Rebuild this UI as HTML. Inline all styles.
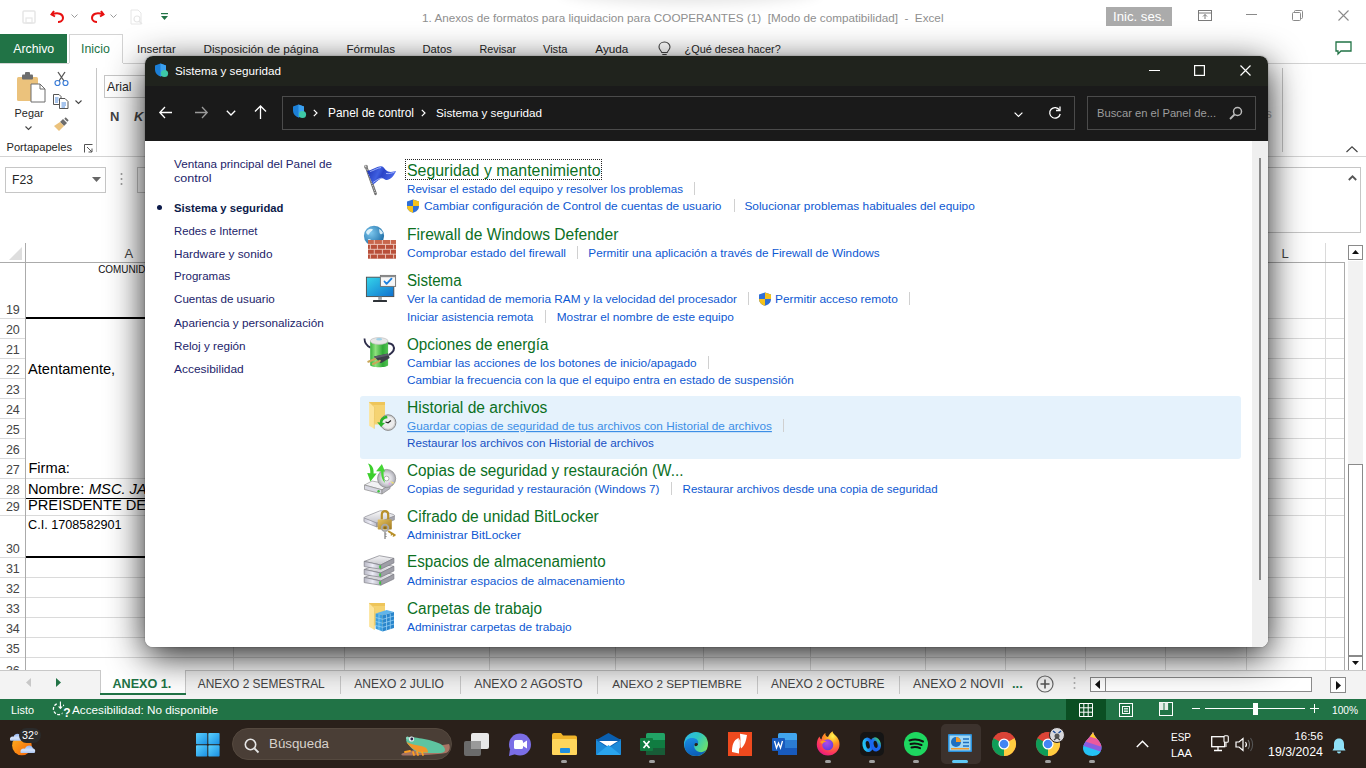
<!DOCTYPE html>
<html><head><meta charset="utf-8">
<style>
*{margin:0;padding:0;box-sizing:border-box}
html,body{width:1366px;height:768px;overflow:hidden;background:#fff;font-family:"Liberation Sans",sans-serif}
.a{position:absolute;white-space:nowrap}
svg.a{overflow:visible}
</style></head><body>

<div class="a" style="left:560px;top:-30px;width:260px;height:30px;border-radius:50%;box-shadow:0 4px 14px rgba(0,0,0,.10)"></div>
<div class="a" style="left:1106px;top:7px;width:66px;height:19px;background:#ababab;"></div>
<svg class="a" style="left:22px;top:10px;" width="14" height="14" viewBox="0 0 14 14"><rect x="1" y="1" width="12" height="12" rx="1" fill="none" stroke="#e6e6e6" stroke-width="1.5"/><rect x="4" y="8" width="6" height="5" fill="none" stroke="#e6e6e6" stroke-width="1.2"/></svg>
<svg class="a" style="left:50px;top:9px;" width="16" height="14" viewBox="0 0 16 14"><path d="M4 2 L1.5 5.5 L5 7.5" fill="none" stroke="#e81010" stroke-width="2"/><path d="M2 5.5 C8 3 13 5 13 9 C13 12 10 13 8 13" fill="none" stroke="#e81010" stroke-width="2"/></svg>
<svg class="a" style="left:71px;top:14px;" width="7" height="4" viewBox="0 0 7 4"><path d="M0.5 0.5 L3.5 3.5 L6.5 0.5" fill="none" stroke="#9a9a9a" stroke-width="1"/></svg>
<svg class="a" style="left:89px;top:9px;" width="16" height="14" viewBox="0 0 16 14"><path d="M12 2 L14.5 5.5 L11 7.5" fill="none" stroke="#e81010" stroke-width="2"/><path d="M14 5.5 C8 3 3 5 3 9 C3 12 6 13 8 13" fill="none" stroke="#e81010" stroke-width="2"/></svg>
<svg class="a" style="left:110px;top:14px;" width="7" height="4" viewBox="0 0 7 4"><path d="M0.5 0.5 L3.5 3.5 L6.5 0.5" fill="none" stroke="#9a9a9a" stroke-width="1"/></svg>
<svg class="a" style="left:130px;top:9px;" width="14" height="16" viewBox="0 0 14 16"><path d="M1 1 H8 L11 4 V15 H1 Z" fill="none" stroke="#e6e6e6" stroke-width="1"/><circle cx="7" cy="10" r="3" fill="none" stroke="#e6e6e6" stroke-width="1.2"/><path d="M9 12 L12 15" stroke="#e6e6e6" stroke-width="1.5"/></svg>
<svg class="a" style="left:161px;top:13px;" width="7" height="8" viewBox="0 0 7 8"><rect x="0" y="0" width="7" height="1.2" fill="#217346"/><path d="M0 3 H7 L3.5 7 Z" fill="#217346"/></svg>
<svg class="a" style="left:1198px;top:10px;" width="14" height="11" viewBox="0 0 14 11"><rect x="0.5" y="0.5" width="13" height="10" fill="none" stroke="#7a7a7a"/><path d="M0.5 3 H13.5" stroke="#7a7a7a"/><path d="M7 9 V4.5 M5 6.5 L7 4.5 L9 6.5" fill="none" stroke="#7a7a7a"/></svg>
<div class="a" style="left:1246px;top:14px;width:11px;height:1px;background:#8a8a8a;"></div>
<svg class="a" style="left:1292px;top:10px;" width="11" height="11" viewBox="0 0 11 11"><rect x="0.5" y="2.5" width="8" height="8" rx="1" fill="none" stroke="#8a8a8a"/><path d="M2.5 2.5 V1.5 Q2.5 0.5 3.5 0.5 H9.5 Q10.5 0.5 10.5 1.5 V7.5 Q10.5 8.5 9.5 8.5 H8.5" fill="none" stroke="#8a8a8a"/></svg>
<svg class="a" style="left:1338px;top:10px;" width="11" height="11" viewBox="0 0 11 11"><path d="M0.5 0.5 L10.5 10.5 M10.5 0.5 L0.5 10.5" stroke="#8a8a8a" stroke-width="1.1"/></svg>
<div class="a" style="left:0px;top:34px;width:67px;height:29px;background:#217346;"></div>
<div class="a" style="left:69px;top:34px;width:54px;height:30px;border:1px solid #d4d4d4;border-bottom:none;background:#fff"></div>
<svg class="a" style="left:658px;top:41px;" width="13" height="15" viewBox="0 0 13 15"><path d="M6.5 1 C3 1 1 3.5 1 6 C1 8.5 3 9.5 3.8 11.5 H9.2 C10 9.5 12 8.5 12 6 C12 3.5 10 1 6.5 1 Z" fill="none" stroke="#444" stroke-width="1.1"/><path d="M4.3 13.5 H8.7" stroke="#444" stroke-width="1.1"/></svg>
<div class="a" style="left:0px;top:63px;width:1366px;height:1px;background:#d4d4d4;"></div>
<div class="a" style="left:69px;top:63px;width:54px;height:1px;background:#fff;"></div>
<svg class="a" style="left:1335px;top:41px;" width="17" height="14" viewBox="0 0 17 14"><path d="M1 1 H16 V10 H6 L3 13 V10 H1 Z" fill="none" stroke="#217346" stroke-width="1.3"/></svg>
<svg class="a" style="left:17px;top:72px;" width="29" height="31" viewBox="0 0 29 31"><rect x="0" y="5" width="21" height="24" rx="1.5" fill="#ebc27c"/><rect x="5" y="2.5" width="11" height="5" rx="1" fill="#6d6d6d"/><rect x="8" y="0" width="5" height="4" rx="1" fill="#6d6d6d"/><path d="M14 12 H23 L28 17 V30 H14 Z" fill="#fff" stroke="#6d6d6d" stroke-width="1"/><path d="M23 12 V17 H28" fill="none" stroke="#6d6d6d" stroke-width="1"/></svg>
<svg class="a" style="left:25px;top:126px;" width="7" height="4" viewBox="0 0 7 4"><path d="M0.5 0.5 L3.5 3.5 L6.5 0.5" fill="none" stroke="#444" stroke-width="1.1"/></svg>
<svg class="a" style="left:54px;top:71px;" width="15" height="15" viewBox="0 0 15 15"><path d="M4 1 L10 10 M11 1 L5 10" stroke="#555" stroke-width="1.3"/><circle cx="3.5" cy="12" r="2.5" fill="none" stroke="#3b7dd8" stroke-width="1.2"/><circle cx="11.5" cy="12" r="2.5" fill="none" stroke="#3b7dd8" stroke-width="1.2"/></svg>
<svg class="a" style="left:53px;top:94px;" width="16" height="15" viewBox="0 0 16 15"><path d="M0.5 0.5 H6 L8 2.5 V10.5 H0.5 Z" fill="#fff" stroke="#555"/><path d="M6.5 4.5 H12 L15 7.5 V14.5 H6.5 Z" fill="#fff" stroke="#555"/><path d="M2 4 H5.5 M2 6 H5.5 M2 8 H5 M8.5 9 H13 M8.5 11 H13 M8.5 13 H12" stroke="#3b7dd8" stroke-width=".9"/></svg>
<svg class="a" style="left:75px;top:100px;" width="7" height="4" viewBox="0 0 7 4"><path d="M0.5 0.5 L3.5 3.5 L6.5 0.5" fill="none" stroke="#444" stroke-width="1.1"/></svg>
<svg class="a" style="left:53px;top:117px;" width="16" height="14" viewBox="0 0 16 14"><path d="M10 2 L14 6 L11 9 L7 5 Z" fill="#6d6d6d"/><path d="M7 5 L11 9 L6 14 L1 9 Z" fill="#ebc27c"/><path d="M12 1 L15 4" stroke="#6d6d6d" stroke-width="2"/></svg>
<svg class="a" style="left:84px;top:144px;" width="9" height="9" viewBox="0 0 9 9"><path d="M0.5 8.5 V0.5 H8.5" fill="none" stroke="#555"/><path d="M3 3 L8 8 M8 4.5 V8 H4.5" fill="none" stroke="#555"/></svg>
<div class="a" style="left:96px;top:68px;width:1px;height:84px;background:#c6c6c6;"></div>
<div class="a" style="left:104px;top:75px;width:60px;height:23px;border:1px solid #c6c6c6;background:#fff"></div>
<div class="a" style="left:1282px;top:68px;width:1px;height:84px;background:#c6c6c6;"></div>
<svg class="a" style="left:1346px;top:146px;" width="12" height="7" viewBox="0 0 12 7"><path d="M0.5 6 L6 0.8 L11.5 6" fill="none" stroke="#444" stroke-width="1.2"/></svg>
<div class="a" style="left:0px;top:156px;width:1366px;height:1px;background:#d4d4d4;"></div>
<div class="a" style="left:5px;top:167px;width:101px;height:26px;border:1px solid #c6c6c6;background:#fff"></div>
<svg class="a" style="left:92px;top:177px;" width="9" height="5" viewBox="0 0 9 5"><path d="M0 0 H9 L4.5 5 Z" fill="#666"/></svg>
<svg class="a" style="left:120px;top:172px;" width="3" height="14" viewBox="0 0 3 14"><circle cx="1.5" cy="2" r="1" fill="#999"/><circle cx="1.5" cy="7" r="1" fill="#999"/><circle cx="1.5" cy="12" r="1" fill="#999"/></svg>
<div class="a" style="left:137px;top:167px;width:30px;height:26px;border:1px solid #c6c6c6;background:#fff"></div>
<div class="a" style="left:1200px;top:167px;width:161px;height:66px;border:1px solid #c6c6c6;background:#fff"></div>
<svg class="a" style="left:1348px;top:175px;" width="9" height="6" viewBox="0 0 9 6"><path d="M0.8 5 L4.5 1.3 L8.2 5" fill="none" stroke="#555" stroke-width="1.8"/></svg>
<div class="a" style="left:233px;top:262px;width:1px;height:408px;background:#dadada;"></div>
<div class="a" style="left:344px;top:262px;width:1px;height:408px;background:#dadada;"></div>
<div class="a" style="left:489px;top:262px;width:1px;height:408px;background:#dadada;"></div>
<div class="a" style="left:615px;top:262px;width:1px;height:408px;background:#dadada;"></div>
<div class="a" style="left:703px;top:262px;width:1px;height:408px;background:#dadada;"></div>
<div class="a" style="left:810px;top:262px;width:1px;height:408px;background:#dadada;"></div>
<div class="a" style="left:925px;top:262px;width:1px;height:408px;background:#dadada;"></div>
<div class="a" style="left:1005px;top:262px;width:1px;height:408px;background:#dadada;"></div>
<div class="a" style="left:1085px;top:262px;width:1px;height:408px;background:#dadada;"></div>
<div class="a" style="left:1165px;top:262px;width:1px;height:408px;background:#dadada;"></div>
<div class="a" style="left:1246px;top:262px;width:1px;height:408px;background:#dadada;"></div>
<div class="a" style="left:1325px;top:243px;width:1px;height:427px;background:#dadada;"></div>
<div class="a" style="left:0px;top:318px;width:25px;height:1px;background:#dadada;"></div>
<div class="a" style="left:234px;top:318px;width:1110px;height:1px;background:#dadada;"></div>
<div class="a" style="left:0px;top:338px;width:25px;height:1px;background:#dadada;"></div>
<div class="a" style="left:234px;top:338px;width:1110px;height:1px;background:#dadada;"></div>
<div class="a" style="left:0px;top:358px;width:25px;height:1px;background:#dadada;"></div>
<div class="a" style="left:234px;top:358px;width:1110px;height:1px;background:#dadada;"></div>
<div class="a" style="left:0px;top:378px;width:25px;height:1px;background:#dadada;"></div>
<div class="a" style="left:234px;top:378px;width:1110px;height:1px;background:#dadada;"></div>
<div class="a" style="left:0px;top:398px;width:25px;height:1px;background:#dadada;"></div>
<div class="a" style="left:234px;top:398px;width:1110px;height:1px;background:#dadada;"></div>
<div class="a" style="left:0px;top:418px;width:25px;height:1px;background:#dadada;"></div>
<div class="a" style="left:234px;top:418px;width:1110px;height:1px;background:#dadada;"></div>
<div class="a" style="left:0px;top:438px;width:25px;height:1px;background:#dadada;"></div>
<div class="a" style="left:234px;top:438px;width:1110px;height:1px;background:#dadada;"></div>
<div class="a" style="left:0px;top:458px;width:25px;height:1px;background:#dadada;"></div>
<div class="a" style="left:234px;top:458px;width:1110px;height:1px;background:#dadada;"></div>
<div class="a" style="left:0px;top:478px;width:1344px;height:1px;background:#dadada;"></div>
<div class="a" style="left:0px;top:498px;width:1344px;height:1px;background:#dadada;"></div>
<div class="a" style="left:0px;top:515px;width:1344px;height:1px;background:#dadada;"></div>
<div class="a" style="left:0px;top:557px;width:1344px;height:1px;background:#dadada;"></div>
<div class="a" style="left:0px;top:577px;width:1344px;height:1px;background:#dadada;"></div>
<div class="a" style="left:0px;top:597px;width:1344px;height:1px;background:#dadada;"></div>
<div class="a" style="left:0px;top:617px;width:1344px;height:1px;background:#dadada;"></div>
<div class="a" style="left:0px;top:637px;width:1344px;height:1px;background:#dadada;"></div>
<div class="a" style="left:0px;top:657px;width:1344px;height:1px;background:#dadada;"></div>
<div class="a" style="left:0;top:657px;width:25px;height:13px;overflow:hidden"><div class="a" style="left:5.90px;top:7.69px;font-size:12.5px;line-height:12.5px;color:#444">36</div></div>
<div class="a" style="left:0px;top:243px;width:1344px;height:19px;background:#fff;opacity:0"></div>
<div class="a" style="left:0px;top:262px;width:1344px;height:1px;background:#ababab;"></div>
<div class="a" style="left:25px;top:243px;width:1px;height:427px;background:#ababab;"></div>
<div class="a" style="left:1344px;top:262px;width:1px;height:408px;background:#ababab;"></div>
<svg class="a" style="left:9px;top:247px;" width="13" height="13" viewBox="0 0 13 13"><path d="M13 0 V13 H0 Z" fill="#dedede"/></svg>
<div class="a" style="left:26px;top:317px;width:1150px;height:2px;background:#000;"></div>
<div class="a" style="left:26px;top:498px;width:1150px;height:1px;background:#000;"></div>
<div class="a" style="left:26px;top:556px;width:1150px;height:2px;background:#000;"></div>
<div class="a" style="left:1348px;top:261px;width:15px;height:409px;background:#f2f2f2;"></div>
<div class="a" style="left:1348px;top:245px;width:15px;height:15px;border:1px solid #8a8a8a;background:#fff"></div>
<svg class="a" style="left:1352px;top:250px;" width="7" height="4" viewBox="0 0 7 4"><path d="M0 4 L3.5 0 L7 4 Z" fill="#111"/></svg>
<div class="a" style="left:1348px;top:464px;width:15px;height:192px;border:1px solid #8a8a8a;background:#fff"></div>
<div class="a" style="left:1348px;top:656px;width:15px;height:15px;border:1px solid #8a8a8a;background:#fff"></div>
<svg class="a" style="left:1352px;top:661px;" width="7" height="4" viewBox="0 0 7 4"><path d="M0 0 L3.5 4 L7 0 Z" fill="#111"/></svg>
<div class="a" style="left:0px;top:670px;width:1366px;height:29px;background:#f3f3f3;"></div>
<div class="a" style="left:0px;top:670px;width:1366px;height:1px;background:#c8c8c8;"></div>
<div class="a" style="left:100px;top:670px;width:86px;height:25px;background:#fff;border-left:1px solid #c8c8c8;border-right:1px solid #c8c8c8"></div>
<div class="a" style="left:100px;top:693px;width:86px;height:2px;background:#217346;"></div>
<svg class="a" style="left:26px;top:678px;" width="5" height="9" viewBox="0 0 5 9"><path d="M5 0 V9 L0 4.5 Z" fill="#c8c8c8"/></svg>
<svg class="a" style="left:56px;top:678px;" width="5" height="9" viewBox="0 0 5 9"><path d="M0 0 V9 L5 4.5 Z" fill="#217346"/></svg>
<div class="a" style="left:340px;top:676px;width:1px;height:18px;background:#c8c8c8;"></div>
<div class="a" style="left:460px;top:676px;width:1px;height:18px;background:#c8c8c8;"></div>
<div class="a" style="left:597px;top:676px;width:1px;height:18px;background:#c8c8c8;"></div>
<div class="a" style="left:757px;top:676px;width:1px;height:18px;background:#c8c8c8;"></div>
<div class="a" style="left:899px;top:676px;width:1px;height:18px;background:#c8c8c8;"></div>
<svg class="a" style="left:1036px;top:675px;" width="18" height="18" viewBox="0 0 18 18"><circle cx="9" cy="9" r="8" fill="none" stroke="#666" stroke-width="1.2"/><path d="M9 4.5 V13.5 M4.5 9 H13.5" stroke="#555" stroke-width="1.6"/></svg>
<svg class="a" style="left:1073px;top:676px;" width="3" height="14" viewBox="0 0 3 14"><circle cx="1.5" cy="2" r="1" fill="#aaa"/><circle cx="1.5" cy="7" r="1" fill="#aaa"/><circle cx="1.5" cy="12" r="1" fill="#aaa"/></svg>
<div class="a" style="left:1090px;top:677px;width:222px;height:15px;border:1px solid #8a8a8a;background:#fff"></div>
<div class="a" style="left:1105px;top:678px;width:1px;height:13px;background:#8a8a8a;"></div>
<svg class="a" style="left:1095px;top:680px;" width="5" height="9" viewBox="0 0 5 9"><path d="M5 0 V9 L0 4.5 Z" fill="#111"/></svg>
<div class="a" style="left:1330px;top:677px;width:16px;height:16px;border:1px solid #8a8a8a;background:#fff"></div>
<svg class="a" style="left:1336px;top:681px;" width="5" height="9" viewBox="0 0 5 9"><path d="M0 0 V9 L5 4.5 Z" fill="#111"/></svg>
<div class="a" style="left:0px;top:699px;width:1366px;height:21px;background:#217346;"></div>
<svg class="a" style="left:50px;top:699px;" width="24" height="21" viewBox="0 0 24 21"><circle cx="9" cy="10" r="5.6" fill="none" stroke="#fff" stroke-width="1.3" stroke-dasharray="2.8 1.6" transform="rotate(-60 9 10)"/><rect x="8" y="2" width="5" height="6" fill="#217346"/><path d="M10.4 2.5 V8.5" stroke="#fff" stroke-width="1.1"/><path d="M8 7.6 H12.8 L10.4 10.2 Z" fill="#fff"/><rect x="12.5" y="7.5" width="8" height="11" fill="#217346"/><text x="13.2" y="17.6" font-size="12" font-weight="bold" fill="#fff" font-family="Liberation Sans">?</text></svg>
<div class="a" style="left:1066px;top:699px;width:40px;height:21px;background:#0b4f23;"></div>
<svg class="a" style="left:1079px;top:703px;" width="14" height="14" viewBox="0 0 14 14"><path d="M0.5 0.5 H13.5 V13.5 H0.5 Z M4.8 0.5 V13.5 M9.2 0.5 V13.5 M0.5 4.8 H13.5 M0.5 9.2 H13.5" fill="none" stroke="#fff" stroke-width="1"/></svg>
<svg class="a" style="left:1119px;top:703px;" width="14" height="14" viewBox="0 0 14 14"><rect x="0.5" y="0.5" width="13" height="13" fill="none" stroke="#fff"/><rect x="3.5" y="3.5" width="7" height="7" fill="none" stroke="#fff"/><path d="M5 5.5 H9 M5 7 H9 M5 8.5 H9" stroke="#fff" stroke-width=".8"/></svg>
<svg class="a" style="left:1159px;top:702px;" width="14" height="14" viewBox="0 0 14 14"><rect x="0.5" y="0.5" width="13" height="13" fill="none" stroke="#fff"/><rect x="0.5" y="0.5" width="4" height="7.5" fill="#e6eee8"/><rect x="5.5" y="0.5" width="3.6" height="7.5" fill="#e6eee8"/></svg>
<div class="a" style="left:1192px;top:708px;width:8px;height:1px;background:#fff;"></div>
<div class="a" style="left:1205px;top:708px;width:100px;height:1px;background:#fff;"></div>
<div class="a" style="left:1253px;top:703px;width:5px;height:12px;background:#fff;"></div>
<div class="a" style="left:1310px;top:708px;width:9px;height:1px;background:#fff;"></div>
<div class="a" style="left:1314px;top:704px;width:1px;height:9px;background:#fff;"></div>
<svg class="a" style="left:0;top:0" width="1366" height="768" font-family="Liberation Sans" xml:space="preserve"><text x="422.00" y="22.00" font-size="11.71" fill="#8f8f8f" textLength="521.50" lengthAdjust="spacingAndGlyphs">1. Anexos de formatos para liquidacion para COOPERANTES (1)  [Modo de compatibilidad]  -  Excel</text><text x="1113.00" y="21.00" font-size="13.18" fill="#fff" textLength="52.00" lengthAdjust="spacingAndGlyphs">Inic. ses.</text><text x="13.20" y="52.70" font-size="12.30" fill="#fff" textLength="41.00" lengthAdjust="spacingAndGlyphs">Archivo</text><text x="81.00" y="52.70" font-size="12.34" fill="#217346" textLength="28.80" lengthAdjust="spacingAndGlyphs">Inicio</text><text x="137.00" y="52.70" font-size="11.42" fill="#262626" textLength="38.70" lengthAdjust="spacingAndGlyphs">Insertar</text><text x="203.50" y="52.70" font-size="11.76" fill="#262626" textLength="115.10" lengthAdjust="spacingAndGlyphs">Disposición de página</text><text x="346.40" y="52.70" font-size="11.66" fill="#262626" textLength="48.60" lengthAdjust="spacingAndGlyphs">Fórmulas</text><text x="422.50" y="52.70" font-size="11.22" fill="#262626" textLength="29.30" lengthAdjust="spacingAndGlyphs">Datos</text><text x="479.60" y="52.70" font-size="10.74" fill="#262626" textLength="36.40" lengthAdjust="spacingAndGlyphs">Revisar</text><text x="542.90" y="52.70" font-size="11.16" fill="#262626" textLength="24.60" lengthAdjust="spacingAndGlyphs">Vista</text><text x="595.30" y="52.70" font-size="11.75" fill="#262626" textLength="33.10" lengthAdjust="spacingAndGlyphs">Ayuda</text><text x="684.60" y="52.70" font-size="10.87" fill="#262626" textLength="96.10" lengthAdjust="spacingAndGlyphs">¿Qué desea hacer?</text><text x="14.60" y="116.60" font-size="10.87" fill="#262626" textLength="29.00" lengthAdjust="spacingAndGlyphs">Pegar</text><text x="6.50" y="151.00" font-size="11.12" fill="#262626" textLength="65.50" lengthAdjust="spacingAndGlyphs">Portapapeles</text><text x="107.00" y="90.60" font-size="12.25" fill="#262626" textLength="24.50" lengthAdjust="spacingAndGlyphs">Arial</text><text x="110.00" y="120.50" font-size="13.00" fill="#444" font-weight="bold">N</text><text x="134.00" y="120.50" font-size="13.00" fill="#444" font-weight="bold" font-style="italic">K</text><text x="1265.50" y="118.00" font-size="12.50" fill="#a8a8a8">s</text><text x="12.00" y="184.00" font-size="12.19" fill="#262626" textLength="21.00" lengthAdjust="spacingAndGlyphs">F23</text><text x="5.90" y="313.50" font-size="12.50" fill="#444">19</text><text x="5.90" y="333.50" font-size="12.50" fill="#444">20</text><text x="5.90" y="353.50" font-size="12.50" fill="#444">21</text><text x="5.90" y="373.50" font-size="12.50" fill="#444">22</text><text x="5.90" y="393.50" font-size="12.50" fill="#444">23</text><text x="5.90" y="413.50" font-size="12.50" fill="#444">24</text><text x="5.90" y="433.50" font-size="12.50" fill="#444">25</text><text x="5.90" y="453.50" font-size="12.50" fill="#444">26</text><text x="5.90" y="473.50" font-size="12.50" fill="#444">27</text><text x="5.90" y="493.50" font-size="12.50" fill="#444">28</text><text x="5.90" y="510.50" font-size="12.50" fill="#444">29</text><text x="5.90" y="552.50" font-size="12.50" fill="#444">30</text><text x="5.90" y="572.50" font-size="12.50" fill="#444">31</text><text x="5.90" y="592.50" font-size="12.50" fill="#444">32</text><text x="5.90" y="612.50" font-size="12.50" fill="#444">33</text><text x="5.90" y="632.50" font-size="12.50" fill="#444">34</text><text x="5.90" y="652.50" font-size="12.50" fill="#444">35</text><text x="124.50" y="258.00" font-size="13.00" fill="#444">A</text><text x="1281.50" y="258.00" font-size="13.00" fill="#444">L</text><text x="98.20" y="273.00" font-size="11.50" fill="#111" textLength="61.00" lengthAdjust="spacingAndGlyphs">COMUNIDAD</text><text x="28.00" y="373.70" font-size="14.67" fill="#000">Atentamente,</text><text x="28.40" y="472.80" font-size="14.67" fill="#000">Firma:</text><text x="28.00" y="493.70" font-size="14.67" fill="#000">Nombre: </text><text x="88.90" y="493.70" font-size="14.67" fill="#000" font-style="italic">MSC. JAIME</text><text x="28.00" y="510.40" font-size="14.67" fill="#000">PREISDENTE DE LA</text><text x="28.00" y="528.80" font-size="12.67" fill="#000">C.I. 1708582901</text><text x="112.40" y="687.50" font-size="12.64" fill="#217346" font-weight="bold" textLength="59.00" lengthAdjust="spacingAndGlyphs">ANEXO 1.</text><text x="197.70" y="687.50" font-size="11.90" fill="#444" textLength="127.00" lengthAdjust="spacingAndGlyphs">ANEXO 2 SEMESTRAL</text><text x="354.30" y="687.50" font-size="12.05" fill="#444" textLength="89.70" lengthAdjust="spacingAndGlyphs">ANEXO 2 JULIO</text><text x="474.20" y="687.50" font-size="12.28" fill="#444" textLength="108.30" lengthAdjust="spacingAndGlyphs">ANEXO 2 AGOSTO</text><text x="612.20" y="687.50" font-size="11.71" fill="#444" textLength="129.50" lengthAdjust="spacingAndGlyphs">ANEXO 2 SEPTIEMBRE</text><text x="771.00" y="687.50" font-size="11.94" fill="#444" textLength="113.50" lengthAdjust="spacingAndGlyphs">ANEXO 2 OCTUBRE</text><text x="913.00" y="687.50" font-size="12.41" fill="#444" textLength="91.00" lengthAdjust="spacingAndGlyphs">ANEXO 2 NOVII</text><text x="1012.00" y="687.50" font-size="13.00" fill="#217346" font-weight="bold">...</text><text x="11.00" y="713.70" font-size="10.89" fill="#fff" textLength="23.00" lengthAdjust="spacingAndGlyphs">Listo</text><text x="72.00" y="713.70" font-size="11.73" fill="#fff" textLength="146.00" lengthAdjust="spacingAndGlyphs">Accesibilidad: No disponible</text><text x="1332.00" y="713.70" font-size="10.17" fill="#fff" textLength="26.00" lengthAdjust="spacingAndGlyphs">100%</text></svg>
<div class="a" style="left:0;top:720px;width:1366px;height:48px;background:#2a201a"></div>
<div class="a" style="left:145px;top:56px;width:1123px;height:591px;border-radius:8px;box-shadow:0 9px 36px rgba(0,0,0,.88),0 0 2px rgba(0,0,0,.35);"></div>
<div class="a" style="left:145px;top:56px;width:1123px;height:591px;border-radius:8px;overflow:hidden;background:#fff">
<div class="a" style="left:-145px;top:-56px;width:1366px;height:768px">
<div class="a" style="left:145px;top:56px;width:1123px;height:30px;background:#20231d;"></div>
<svg class="a" style="left:154px;top:63px;" width="15" height="15" viewBox="0 0 15 15"><path d="M6.5 0.5 L12 2.5 V6.5 C12 10 9.5 12.5 6.5 13.5 C3.5 12.5 1 10 1 6.5 V2.5 Z" fill="#1c7fd6"/><path d="M6.5 0.5 L12 2.5 V6.5 C12 10 9.5 12.5 6.5 13.5 Z" fill="#3aa0f0"/><circle cx="10.5" cy="10.5" r="3.6" fill="#3ec9a7"/></svg>
<div class="a" style="left:1149px;top:70px;width:11px;height:1px;background:#fff;"></div>
<svg class="a" style="left:1194px;top:65px;" width="11" height="11" viewBox="0 0 11 11"><rect x="0.6" y="0.6" width="9.8" height="9.8" fill="none" stroke="#fff" stroke-width="1.2"/></svg>
<svg class="a" style="left:1240px;top:65px;" width="11" height="11" viewBox="0 0 11 11"><path d="M0.5 0.5 L10.5 10.5 M10.5 0.5 L0.5 10.5" stroke="#fff" stroke-width="1.2"/></svg>
<div class="a" style="left:145px;top:86px;width:1123px;height:55px;background:#1a1a1a;"></div>
<svg class="a" style="left:159px;top:106px;" width="14" height="13" viewBox="0 0 14 13"><path d="M0.5 6.5 H13 M6 1 L0.8 6.5 L6 12" fill="none" stroke="#fff" stroke-width="1.3"/></svg>
<svg class="a" style="left:194px;top:106px;" width="14" height="13" viewBox="0 0 14 13"><path d="M1 6.5 H13.5 M8 1 L13.2 6.5 L8 12" fill="none" stroke="#9a9a9a" stroke-width="1.3"/></svg>
<svg class="a" style="left:226px;top:110px;" width="10" height="6" viewBox="0 0 10 6"><path d="M0.8 0.8 L5 5 L9.2 0.8" fill="none" stroke="#fff" stroke-width="1.3"/></svg>
<svg class="a" style="left:254px;top:105px;" width="13" height="14" viewBox="0 0 13 14"><path d="M6.5 14 V1 M1 6.5 L6.5 1 L12 6.5" fill="none" stroke="#fff" stroke-width="1.3"/></svg>
<div class="a" style="left:282px;top:96px;width:793px;height:34px;border:1px solid #4b4b4b"></div>
<svg class="a" style="left:292px;top:104px;" width="15" height="15" viewBox="0 0 15 15"><path d="M6.5 0.5 L12 2.5 V6.5 C12 10 9.5 12.5 6.5 13.5 C3.5 12.5 1 10 1 6.5 V2.5 Z" fill="#1c7fd6"/><path d="M6.5 0.5 L12 2.5 V6.5 C12 10 9.5 12.5 6.5 13.5 Z" fill="#3aa0f0"/><circle cx="10.5" cy="10.5" r="3.6" fill="#3ec9a7"/></svg>
<svg class="a" style="left:313px;top:109px;" width="5" height="8" viewBox="0 0 5 8"><path d="M0.8 0.8 L4 4 L0.8 7.2" fill="none" stroke="#fff" stroke-width="1.2"/></svg>
<svg class="a" style="left:421px;top:109px;" width="5" height="8" viewBox="0 0 5 8"><path d="M0.8 0.8 L4 4 L0.8 7.2" fill="none" stroke="#fff" stroke-width="1.2"/></svg>
<svg class="a" style="left:1014px;top:112px;" width="9" height="5" viewBox="0 0 9 5"><path d="M0.6 0.6 L4.5 4.4 L8.4 0.6" fill="none" stroke="#fff" stroke-width="1.2"/></svg>
<svg class="a" style="left:1048px;top:106px;" width="14" height="14" viewBox="0 0 14 14"><path d="M11.5 4 A5.3 5.3 0 1 0 12.2 8" fill="none" stroke="#fff" stroke-width="1.3"/><path d="M12 0.5 V4.5 H8" fill="none" stroke="#fff" stroke-width="1.3"/></svg>
<div class="a" style="left:1087px;top:96px;width:169px;height:34px;border:1px solid #4b4b4b"></div>
<svg class="a" style="left:1229px;top:106px;" width="14" height="14" viewBox="0 0 14 14"><circle cx="8.5" cy="5.5" r="4" fill="none" stroke="#bbb" stroke-width="1.5"/><path d="M5.5 8.5 L1 13" stroke="#bbb" stroke-width="1.8"/></svg>
<div class="a" style="left:1252px;top:141px;width:16px;height:506px;background:#efefef;"></div>
<div class="a" style="left:1259px;top:158px;width:2px;height:422px;background:#8a8a8a;"></div>
<div class="a" style="left:157px;top:205px;width:5px;height:5px;border-radius:50%;background:#0c1a4a"></div>
<div class="a" style="left:360px;top:396px;width:881px;height:63px;background:#e5f2fc;border-radius:3px;"></div>
<div class="a" style="left:405px;top:159px;width:197px;height:21px;border:1px dotted #222"></div>
<div class="a" style="left:694px;top:182px;width:1px;height:13px;background:#d0d0d0;"></div>
<svg class="a" style="left:406px;top:199px;" width="14" height="14" viewBox="0 0 14 14"><path d="M7 0.5 L13 2.5 V7 C13 10.5 10.5 12.8 7 13.8 C3.5 12.8 1 10.5 1 7 V2.5 Z" fill="#2f6fd6"/><path d="M7 0.5 L13 2.5 V7 H7 Z" fill="#f6c21a"/><path d="M7 7 H1 C1 10.5 3.5 12.8 7 13.8 Z" fill="#f6c21a"/></svg>
<div class="a" style="left:734px;top:199px;width:1px;height:13px;background:#d0d0d0;"></div>
<div class="a" style="left:577px;top:246px;width:1px;height:13px;background:#d0d0d0;"></div>
<div class="a" style="left:748px;top:292px;width:1px;height:13px;background:#d0d0d0;"></div>
<svg class="a" style="left:758px;top:292px;" width="14" height="14" viewBox="0 0 14 14"><path d="M7 0.5 L13 2.5 V7 C13 10.5 10.5 12.8 7 13.8 C3.5 12.8 1 10.5 1 7 V2.5 Z" fill="#2f6fd6"/><path d="M7 0.5 L13 2.5 V7 H7 Z" fill="#f6c21a"/><path d="M7 7 H1 C1 10.5 3.5 12.8 7 13.8 Z" fill="#f6c21a"/></svg>
<div class="a" style="left:909px;top:292px;width:1px;height:13px;background:#d0d0d0;"></div>
<div class="a" style="left:545px;top:310px;width:1px;height:13px;background:#d0d0d0;"></div>
<div class="a" style="left:708px;top:356px;width:1px;height:13px;background:#d0d0d0;"></div>
<div class="a" style="left:783px;top:419px;width:1px;height:13px;background:#d0d0d0;"></div>
<div class="a" style="left:671px;top:482px;width:1px;height:13px;background:#d0d0d0;"></div>
<svg class="a" style="left:360px;top:160px;" width="40" height="40" viewBox="0 0 40 40"><defs><linearGradient id="fg" x1="0" y1="0" x2="1" y2="0.3"><stop offset="0" stop-color="#1a2fb0"/><stop offset=".45" stop-color="#3f5fe0"/><stop offset=".6" stop-color="#2a44c8"/><stop offset="1" stop-color="#4a68e8"/></linearGradient></defs>
<path d="M6.2 7 L15.6 33.8" stroke="#6e6e6e" stroke-width="2.6" stroke-linecap="round"/><path d="M6.2 7 L15.6 33.8" stroke="#e8e8e8" stroke-width=".9" stroke-dasharray="1.2 1.2"/>
<circle cx="6" cy="6.8" r="2" fill="#8a8a8a"/><circle cx="5.6" cy="6.3" r=".8" fill="#ddd"/>
<path d="M7 11 C12 10.5 16 6.5 21 6.3 C24 6.2 24.5 10 28 11.5 C31 12.5 34 11.5 36 11 C35 14 31.5 19.5 27 20 C24 20.3 24 17.5 21 18.5 C18 19.5 16 23 13 24.5 Z" fill="url(#fg)"/>
<path d="M10 11.5 C14 10.5 17 8 21 7.5 M13 22.5 C16 20.5 18 19 21.5 18 M26 13.5 C29 14 32 13 34.5 12" fill="none" stroke="#a9bbff" stroke-width=".9"/></svg>
<svg class="a" style="left:360px;top:222px;" width="40" height="40" viewBox="0 0 40 40"><defs><radialGradient id="gl" cx=".35" cy=".35" r=".7"><stop offset="0" stop-color="#7cc7ee"/><stop offset="1" stop-color="#1f6fa8"/></radialGradient></defs>
<circle cx="14" cy="13.8" r="10.1" fill="url(#gl)"/>
<path d="M6 10 C8 7 11 6 13 7.5 C12 9.5 9.5 10 9 12.5 C7.5 13 6.5 12 6 10 Z M19 7 C21 8 22.5 9 23 11 C21.5 13 20 12.5 19.5 10.5 Z M8 17 C10 16.5 12 17.5 11 20 C9.5 19.5 8.5 18.5 8 17 Z" fill="#e8f6fc" opacity=".9"/>
<rect x="8" y="18" width="28" height="18.7" fill="#b9503a"/><rect x="8" y="18" width="28" height="5" fill="#c8664c"/>
<path d="M8 22.4 H36 M8 27.3 H36 M8 32.2 H36" stroke="#eec9bd" stroke-width=".9"/>
<path d="M14.3 18 V22.4 M22.4 18 V22.4 M30.5 18 V22.4 M10.4 22.4 V27.3 M17.4 22.4 V27.3 M25.5 22.4 V27.3 M33.6 22.4 V27.3 M14.3 27.3 V32.2 M22.4 27.3 V32.2 M30.5 27.3 V32.2 M10.4 32.2 V36.7 M17.4 32.2 V36.7 M25.5 32.2 V36.7 M33.6 32.2 V36.7" stroke="#eec9bd" stroke-width=".9"/></svg>
<svg class="a" style="left:360px;top:268px;" width="40" height="40" viewBox="0 0 40 40"><defs><linearGradient id="scr" x1="0" y1="0" x2="1" y2="1"><stop offset="0" stop-color="#35d6ea"/><stop offset="1" stop-color="#0f6fcf"/></linearGradient></defs>
<rect x="6.4" y="9.2" width="27.4" height="19.4" fill="url(#scr)" stroke="#4a4a4a" stroke-width=".9"/>
<rect x="18.2" y="28.8" width="3.7" height="3" fill="#9aa0a6"/><rect x="13" y="32" width="14" height="2" rx=".6" fill="#2f3338"/>
<rect x="20.4" y="7.4" width="15.2" height="11" fill="#f6f6f6" stroke="#707070" stroke-width=".9"/><rect x="20.4" y="7.4" width="15.2" height="1.8" fill="#8a8a8a"/>
<path d="M24.5 13.5 L26.6 15.9 L31.5 10.7" fill="none" stroke="#1a7fe0" stroke-width="1.8" stroke-linecap="round" stroke-linejoin="round"/></svg>
<svg class="a" style="left:360px;top:332px;" width="40" height="40" viewBox="0 0 40 40"><defs><linearGradient id="bat" x1="0" y1="0" x2="1" y2="0"><stop offset="0" stop-color="#36b23a"/><stop offset=".3" stop-color="#8ee07e"/><stop offset=".7" stop-color="#2faa36"/><stop offset="1" stop-color="#55c255"/></linearGradient></defs>
<path d="M4.5 6.5 C4.5 11 7 14 10.5 15.6" fill="none" stroke="#2d2d4a" stroke-width="1.8"/>
<path d="M27.5 11.2 C33 11 35 15 33.5 18.5 C32.5 20.5 30.5 22 29 23" fill="none" stroke="#2d2d4a" stroke-width="2"/>
<path d="M10.2 9 V33 C10.2 36 28.1 36 28.1 33 V9 Z" fill="url(#bat)"/>
<ellipse cx="19.1" cy="9" rx="8.9" ry="3.4" fill="#e6e6e6" stroke="#b8b8b8" stroke-width=".6"/><ellipse cx="19.1" cy="7.2" rx="3" ry="1.3" fill="#9fd0e6"/>
<path d="M14 24.5 L28 21.4 L29.7 26 L20.8 31.3 Z" fill="#3c3f48"/><path d="M14 24.5 L28 21.4 L28.8 23.5 L15 26.5 Z" fill="#5a5e68"/>
<path d="M8.3 29.7 L15.1 27.1 M13 32 L19.8 28.9" stroke="#c9a75a" stroke-width="2.1" stroke-linecap="round"/></svg>
<svg class="a" style="left:360px;top:396px;" width="40" height="40" viewBox="0 0 40 40"><path d="M9.1 6 H25 V28.6 H14.3 Z" fill="#f5d372"/><path d="M9.1 6 H25 V9 H12.5 Z" fill="#eec55a"/>
<path d="M9.1 6 L14.6 11 L14.3 32.8 L9.1 29.7 Z" fill="#fde49a"/><path d="M9.1 6 L14.6 11 L14.3 32.8" fill="none" stroke="#e7c35c" stroke-width=".6"/><circle cx="28.1" cy="26.6" r="7.8" fill="#cfcfcf" stroke="#8a8a8a" stroke-width="1"/><circle cx="28.1" cy="26.6" r="6.2" fill="#ececec"/>
<path d="M25.5 26 L28.1 26.8 L31 24.5" fill="none" stroke="#222" stroke-width="1.1"/>
<path d="M27 19.8 C22 20.5 20 23 20 26.5 L17.2 26.3 L21 31 L25 27 L22.4 26.8 C22.6 24 24 22.6 27.5 22.2 Z" fill="#2cb52c"/></svg>
<svg class="a" style="left:360px;top:459px;" width="40" height="40" viewBox="0 0 40 40"><defs><radialGradient id="cd" cx=".5" cy=".5" r=".5"><stop offset="0" stop-color="#fff"/><stop offset=".6" stop-color="#d6d6dc"/><stop offset="1" stop-color="#a8a8b0"/></radialGradient></defs>
<path d="M4.5 26 L12 22 L30 25.5 L22 30.8 Z" fill="#f2f2f4" stroke="#9a9a9a" stroke-width=".7"/>
<path d="M4.5 26 L22 30.8 V35 L4.5 30.5 Z" fill="#d8d8e2" stroke="#8a8a8a" stroke-width=".7"/>
<path d="M22 30.8 L30 25.5 V29.5 L22 35 Z" fill="#b8b8c0" stroke="#8a8a8a" stroke-width=".7"/><circle cx="18.6" cy="32.3" r="1.2" fill="#3ec43e"/>
<circle cx="26.6" cy="19.5" r="9.1" fill="url(#cd)" stroke="#8a8a8a" stroke-width=".7"/><circle cx="26.6" cy="19.5" r="2.4" fill="#fff" stroke="#9a9a9a" stroke-width=".8"/>
<path d="M30 22 L34 23.5 L33 25 Z" fill="#f0e070"/><path d="M29 23 L31 26 L28.5 25.5 Z" fill="#e6a0e0"/>
<path d="M8 4.4 C12 5.5 14 9 13.6 14.5 L16.7 14.5 L10.4 22.4 L7.2 14 L10.3 14.3 C10.5 10 9.5 7 8 4.4 Z" fill="#3ccf2c"/>
<path d="M25 24 C22.5 21 21 18 21.2 12.5 L16.1 12.2 L21.9 5 L25 12.5 L23.5 12.5 C23.5 17 24 20 25 24 Z" fill="#46d636"/></svg>
<svg class="a" style="left:360px;top:505px;" width="40" height="40" viewBox="0 0 40 40"><defs><linearGradient id="gold" x1="0" y1="0" x2="1" y2="1"><stop offset="0" stop-color="#e6c260"/><stop offset="1" stop-color="#a07a20"/></linearGradient></defs>
<defs><linearGradient id="slab" x1="0" y1="0" x2="0" y2="1"><stop offset="0" stop-color="#fafafa"/><stop offset="1" stop-color="#c4c4cc"/></linearGradient><linearGradient id="slabf" x1="0" y1="0" x2="1" y2="0"><stop offset="0" stop-color="#c8c8d4"/><stop offset=".5" stop-color="#eeeef8"/><stop offset="1" stop-color="#b8b8c4"/></linearGradient></defs>
<path d="M4.5 12 L19.5 6 C20.5 5.6 21.5 5.6 22.5 6 L33.5 9.5 C34.8 10 34.8 11.2 33.6 11.8 L18.5 17.8 C17.5 18.2 16.5 18.2 15.5 17.8 L4.8 13.8 C3.8 13.4 3.8 12.4 4.5 12 Z" fill="url(#slab)" stroke="#8e8e96" stroke-width=".7"/>
<path d="M4.2 13 L16.8 18.1 V22 L4.2 16.9 C3.8 16.6 3.8 13.3 4.2 13 Z" fill="url(#slabf)" stroke="#8e8e96" stroke-width=".7"/>
<path d="M16.8 18.1 L34.4 11 V14.8 L16.8 22 Z" fill="#a6a6ae" stroke="#8e8e96" stroke-width=".7"/>
<path d="M21.8 14.6 V10 C21.8 4.8 28.2 4.8 28.2 10 V14.6" fill="none" stroke="#b8902a" stroke-width="2.2"/>
<rect x="17.7" y="14.6" width="14.1" height="9.9" rx=".8" fill="url(#gold)"/>
<path d="M28.1 26 L35.4 30.7" stroke="#b8902a" stroke-width="2"/><path d="M32 28.5 L31 30.5 M34 29.8 L33 31.6" stroke="#b8902a" stroke-width="1.2"/>
<circle cx="25" cy="22.9" r="3.3" fill="none" stroke="#a8a8a8" stroke-width="1.8"/><circle cx="25" cy="22.9" r="1.4" fill="#8a6a1a"/>
<path d="M25 26.2 V33.9" stroke="#b0b0b0" stroke-width="2"/><path d="M25 29 H26.6 M25 31.5 H26.6" stroke="#8a8a8a" stroke-width="1"/></svg>
<svg class="a" style="left:360px;top:551px;" width="40" height="40" viewBox="0 0 40 40"><defs><linearGradient id="dtop" x1="0" y1="0" x2="0" y2="1"><stop offset="0" stop-color="#f4f4f6"/><stop offset="1" stop-color="#c8c8ce"/></linearGradient><linearGradient id="slabf2" x1="0" y1="0" x2="1" y2="0"><stop offset="0" stop-color="#b8b8c4"/><stop offset=".5" stop-color="#ececf6"/><stop offset="1" stop-color="#b0b0bc"/></linearGradient></defs><g transform="translate(0 16)"><path d="M4.2 10.4 L19.3 4.7 L33.9 7.3 L20.8 14 Z" fill="url(#dtop)" stroke="#7e7e86" stroke-width=".7" stroke-linejoin="round"/>
<path d="M4.2 10.4 L20.8 14 V18.2 L4.2 15.6 Z" fill="url(#slabf2)" stroke="#7e7e86" stroke-width=".7" stroke-linejoin="round"/>
<path d="M20.8 14 L33.9 7.3 V12 L20.8 18.2 Z" fill="#9e9ea6" stroke="#7e7e86" stroke-width=".7" stroke-linejoin="round"/>
<rect x="19.2" y="14.4" width="1.8" height="3" fill="#3ec43e"/></g><g transform="translate(0 8)"><path d="M4.2 10.4 L19.3 4.7 L33.9 7.3 L20.8 14 Z" fill="url(#dtop)" stroke="#7e7e86" stroke-width=".7" stroke-linejoin="round"/>
<path d="M4.2 10.4 L20.8 14 V18.2 L4.2 15.6 Z" fill="url(#slabf2)" stroke="#7e7e86" stroke-width=".7" stroke-linejoin="round"/>
<path d="M20.8 14 L33.9 7.3 V12 L20.8 18.2 Z" fill="#9e9ea6" stroke="#7e7e86" stroke-width=".7" stroke-linejoin="round"/>
<rect x="19.2" y="14.4" width="1.8" height="3" fill="#3ec43e"/></g><g transform="translate(0 0)"><path d="M4.2 10.4 L19.3 4.7 L33.9 7.3 L20.8 14 Z" fill="url(#dtop)" stroke="#7e7e86" stroke-width=".7" stroke-linejoin="round"/>
<path d="M4.2 10.4 L20.8 14 V18.2 L4.2 15.6 Z" fill="url(#slabf2)" stroke="#7e7e86" stroke-width=".7" stroke-linejoin="round"/>
<path d="M20.8 14 L33.9 7.3 V12 L20.8 18.2 Z" fill="#9e9ea6" stroke="#7e7e86" stroke-width=".7" stroke-linejoin="round"/>
<rect x="19.2" y="14.4" width="1.8" height="3" fill="#3ec43e"/></g></svg>
<svg class="a" style="left:360px;top:597px;" width="40" height="40" viewBox="0 0 40 40"><path d="M9.1 6 H25 V28.6 H14.3 Z" fill="#f5d372"/><path d="M9.1 6 H25 V9 H12.5 Z" fill="#eec55a"/>
<path d="M9.1 6 L14.6 11 L14.3 32.8 L9.1 29.7 Z" fill="#fde49a"/><path d="M9.1 6 L14.6 11 L14.3 32.8" fill="none" stroke="#e7c35c" stroke-width=".6"/><path d="M15.6 16.4 L26.6 13 L34 15 L22.7 18.2 Z" fill="#5fb4ea"/>
<path d="M15.6 16.4 L22.7 18.2 V34.6 L15.6 31.8 Z" fill="#3a9ee0"/><path d="M22.7 18.2 L34 15 V31 L22.7 34.6 Z" fill="#2a86cc"/>
<path d="M15.6 20.5 L22.7 22.3 L34 19 M15.6 24.5 L22.7 26.3 L34 23 M15.6 28.5 L22.7 30.3 L34 27 M19 17.5 V33 M26.5 17.5 V33.5 M30.3 16.5 V32" fill="none" stroke="#9fd6f7" stroke-width=".7"/></svg>
<svg class="a" style="left:0;top:0" width="1366" height="768" font-family="Liberation Sans" xml:space="preserve"><text x="175.00" y="75.00" font-size="11.70" fill="#fff" textLength="106.00" lengthAdjust="spacingAndGlyphs">Sistema y seguridad</text><text x="328.00" y="117.00" font-size="11.90" fill="#fff" textLength="86.00" lengthAdjust="spacingAndGlyphs">Panel de control</text><text x="436.00" y="117.00" font-size="11.70" fill="#fff" textLength="106.00" lengthAdjust="spacingAndGlyphs">Sistema y seguridad</text><text x="1097.00" y="117.00" font-size="11.21" fill="#9d9d9d" textLength="119.00" lengthAdjust="spacingAndGlyphs">Buscar en el Panel de...</text><text x="174.00" y="168.40" font-size="11.80" fill="#22236a" textLength="158.00" lengthAdjust="spacingAndGlyphs">Ventana principal del Panel de</text><text x="174.00" y="181.90" font-size="11.80" fill="#22236a" textLength="37.60" lengthAdjust="spacingAndGlyphs">control</text><text x="174.00" y="212.00" font-size="11.25" fill="#0c1a4a" font-weight="bold" textLength="109.40" lengthAdjust="spacingAndGlyphs">Sistema y seguridad</text><text x="174.00" y="235.00" font-size="11.80" fill="#22236a" textLength="83.50" lengthAdjust="spacingAndGlyphs">Redes e Internet</text><text x="174.00" y="257.50" font-size="11.80" fill="#22236a" textLength="98.50" lengthAdjust="spacingAndGlyphs">Hardware y sonido</text><text x="174.00" y="280.00" font-size="11.80" fill="#22236a" textLength="56.30" lengthAdjust="spacingAndGlyphs">Programas</text><text x="174.00" y="303.40" font-size="11.80" fill="#22236a" textLength="100.70" lengthAdjust="spacingAndGlyphs">Cuentas de usuario</text><text x="174.00" y="327.00" font-size="11.80" fill="#22236a" textLength="149.75" lengthAdjust="spacingAndGlyphs">Apariencia y personalización</text><text x="174.00" y="349.70" font-size="11.80" fill="#22236a" textLength="71.60" lengthAdjust="spacingAndGlyphs">Reloj y región</text><text x="174.00" y="372.50" font-size="11.80" fill="#22236a" textLength="69.75" lengthAdjust="spacingAndGlyphs">Accesibilidad</text><text x="407.00" y="175.70" font-size="15.60" fill="#0c701f" textLength="193.50" lengthAdjust="spacingAndGlyphs">Seguridad y mantenimiento</text><text x="407.00" y="193.00" font-size="11.80" fill="#0d58d2" textLength="276.00" lengthAdjust="spacingAndGlyphs">Revisar el estado del equipo y resolver los problemas</text><text x="424.00" y="210.00" font-size="11.80" fill="#0d58d2" textLength="297.50" lengthAdjust="spacingAndGlyphs">Cambiar configuración de Control de cuentas de usuario</text><text x="744.40" y="210.00" font-size="11.80" fill="#0d58d2" textLength="230.40" lengthAdjust="spacingAndGlyphs">Solucionar problemas habituales del equipo</text><text x="407.00" y="239.50" font-size="15.60" fill="#0c701f" textLength="211.40" lengthAdjust="spacingAndGlyphs">Firewall de Windows Defender</text><text x="407.00" y="257.00" font-size="11.80" fill="#0d58d2" textLength="159.00" lengthAdjust="spacingAndGlyphs">Comprobar estado del firewall</text><text x="588.30" y="257.00" font-size="11.80" fill="#0d58d2" textLength="291.30" lengthAdjust="spacingAndGlyphs">Permitir una aplicación a través de Firewall de Windows</text><text x="407.00" y="285.70" font-size="15.60" fill="#0c701f" textLength="54.60" lengthAdjust="spacingAndGlyphs">Sistema</text><text x="407.00" y="303.00" font-size="11.80" fill="#0d58d2" textLength="330.00" lengthAdjust="spacingAndGlyphs">Ver la cantidad de memoria RAM y la velocidad del procesador</text><text x="775.00" y="303.00" font-size="11.80" fill="#0d58d2" textLength="122.80" lengthAdjust="spacingAndGlyphs">Permitir acceso remoto</text><text x="407.00" y="320.70" font-size="11.80" fill="#0d58d2" textLength="126.40" lengthAdjust="spacingAndGlyphs">Iniciar asistencia remota</text><text x="556.70" y="320.70" font-size="11.80" fill="#0d58d2" textLength="177.20" lengthAdjust="spacingAndGlyphs">Mostrar el nombre de este equipo</text><text x="407.00" y="349.50" font-size="15.60" fill="#0c701f" textLength="141.50" lengthAdjust="spacingAndGlyphs">Opciones de energía</text><text x="407.00" y="367.00" font-size="11.80" fill="#0d58d2" textLength="289.60" lengthAdjust="spacingAndGlyphs">Cambiar las acciones de los botones de inicio/apagado</text><text x="407.00" y="383.70" font-size="11.80" fill="#0d58d2" textLength="386.90" lengthAdjust="spacingAndGlyphs">Cambiar la frecuencia con la que el equipo entra en estado de suspensión</text><text x="407.00" y="412.50" font-size="15.60" fill="#0c701f" textLength="140.40" lengthAdjust="spacingAndGlyphs">Historial de archivos</text><text x="407.00" y="430.00" font-size="11.80" fill="#3c8ee6" textLength="364.90" lengthAdjust="spacingAndGlyphs" text-decoration="underline">Guardar copias de seguridad de tus archivos con Historial de archivos</text><text x="407.00" y="447.00" font-size="11.80" fill="#1650c4" textLength="246.90" lengthAdjust="spacingAndGlyphs">Restaurar los archivos con Historial de archivos</text><text x="407.00" y="475.70" font-size="15.60" fill="#0c701f" textLength="276.40" lengthAdjust="spacingAndGlyphs">Copias de seguridad y restauración (W...</text><text x="407.00" y="493.00" font-size="11.80" fill="#0d58d2" textLength="252.40" lengthAdjust="spacingAndGlyphs">Copias de seguridad y restauración (Windows 7)</text><text x="682.60" y="493.00" font-size="11.80" fill="#0d58d2" textLength="255.00" lengthAdjust="spacingAndGlyphs">Restaurar archivos desde una copia de seguridad</text><text x="407.00" y="521.70" font-size="15.60" fill="#0c701f" textLength="191.80" lengthAdjust="spacingAndGlyphs">Cifrado de unidad BitLocker</text><text x="407.00" y="538.70" font-size="11.80" fill="#0d58d2" textLength="114.00" lengthAdjust="spacingAndGlyphs">Administrar BitLocker</text><text x="407.00" y="567.40" font-size="15.60" fill="#0c701f" textLength="198.60" lengthAdjust="spacingAndGlyphs">Espacios de almacenamiento</text><text x="407.00" y="585.00" font-size="11.80" fill="#0d58d2" textLength="217.90" lengthAdjust="spacingAndGlyphs">Administrar espacios de almacenamiento</text><text x="407.00" y="613.60" font-size="15.60" fill="#0c701f" textLength="135.00" lengthAdjust="spacingAndGlyphs">Carpetas de trabajo</text><text x="407.00" y="630.60" font-size="11.80" fill="#0d58d2" textLength="164.70" lengthAdjust="spacingAndGlyphs">Administrar carpetas de trabajo</text></svg>
</div></div>
<svg class="a" style="left:0px;top:720px;" width="50" height="48" viewBox="0 0 50 48"><defs><linearGradient id="sun" x1="0" y1="0" x2="1" y2="1"><stop offset="0" stop-color="#ffb31f"/><stop offset="1" stop-color="#f5620a"/></linearGradient><linearGradient id="cl" x1="0" y1="0" x2="0" y2="1"><stop offset="0" stop-color="#8fb4f5"/><stop offset=".6" stop-color="#d6e4fb"/><stop offset="1" stop-color="#aac4f0"/></linearGradient></defs>
<circle cx="21.9" cy="25.5" r="9.8" fill="url(#sun)"/>
<path d="M10 20 C9.5 17.5 11.5 16 13.5 16.8 C14.5 13 19.5 12.5 21 16 C23 16 24.5 18 23.5 20.7 H11.5 C10.5 20.7 10 20.5 10 20 Z" fill="url(#cl)"/>
<path d="M20.5 32.5 C20 29.5 22.5 28 25 28.8 C26.5 24.5 32 24.5 33 28.5 C35 28.5 36 31 34.5 33 H22 C21 33 20.5 33 20.5 32.5 Z" fill="url(#cl)"/></svg>
<div class="a" style="left:18.6px;top:727.5px;width:22.8px;height:15.3px;border-radius:8px;background:#2a2a2a"></div>
<svg class="a" style="left:196px;top:733px;" width="24" height="24" viewBox="0 0 24 24"><defs><linearGradient id="wl" x1="0" y1="0" x2="1" y2="1"><stop offset="0" stop-color="#5ad1ff"/><stop offset="1" stop-color="#1a8fe3"/></linearGradient></defs>
<rect x="0" y="0" width="11.3" height="11.3" rx="0.8" fill="url(#wl)"/><rect x="12.3" y="0" width="11.3" height="11.3" rx="0.8" fill="url(#wl)"/><rect x="0" y="12.3" width="11.3" height="11.3" rx="0.8" fill="url(#wl)"/><rect x="12.3" y="12.3" width="11.3" height="11.3" rx="0.8" fill="url(#wl)"/></svg>
<div class="a" style="left:232px;top:728px;width:220px;height:32px;border-radius:16px;background:#4a3e36;border:1px solid #55493f"></div>
<svg class="a" style="left:244px;top:738px;" width="16" height="16" viewBox="0 0 16 16"><circle cx="6.5" cy="6.5" r="5.2" fill="none" stroke="#e6e6e6" stroke-width="1.6"/><path d="M10.5 10.5 L14.5 14.5" stroke="#e6e6e6" stroke-width="1.8"/></svg>
<svg class="a" style="left:398px;top:732px;" width="52" height="24" viewBox="0 0 52 24"><path d="M4 21.5 C12 18 30 15.5 51 12 C53 16 51 20 48 21 C35 23 15 23.5 5 23.5 C3 23.5 3 22 4 21.5 Z" fill="#a77464"/>
<path d="M8 8 C9 5 13 4 17 5.5 C22 6.5 30 7 36 9.5 C42 11 47 14 47 18 C47 20.5 44 21 40 21 L22 21 C17 20 12 15 9 11 Z" fill="#5ec4a0"/>
<path d="M8.5 10 C11 14 16 18.5 22 20.5 L30 20.5 C30 17 28 15 23 14 C18 13 12 12 8.5 10 Z" fill="#f0962a"/>
<circle cx="13.5" cy="7" r="2.6" fill="#e8e8f0"/><circle cx="13.8" cy="7" r="1.4" fill="#2a2a4a"/><circle cx="9.5" cy="6" r="1.6" fill="#8ad8c0"/>
<path d="M7 20 L12 19 M15 20 L16 23 M19 20 L20 23 M24 20 L25 23" stroke="#ffa020" stroke-width="1.8" stroke-linecap="round"/></svg>
<svg class="a" style="left:464px;top:733px;" width="25" height="23" viewBox="0 0 25 23"><rect x="0" y="8" width="17" height="15" rx="2" fill="#6b6b6b"/><rect x="7" y="0" width="18" height="16" rx="2" fill="#e8e8e8"/><rect x="7" y="8" width="10" height="8" fill="#9a9a9a"/></svg>
<svg class="a" style="left:508px;top:733px;" width="24" height="24" viewBox="0 0 24 24"><circle cx="12" cy="11.5" r="11" fill="#7b6ee6"/><path d="M2 16 L1 23 L8 21 Z" fill="#7b6ee6"/><rect x="6" y="7" width="9" height="9" rx="1.5" fill="#fff"/><path d="M15 10 L19 7.5 V15.5 L15 13 Z" fill="#fff"/></svg>
<svg class="a" style="left:552px;top:733px;" width="25" height="22" viewBox="0 0 25 22"><path d="M0 2 Q0 0 2 0 H9 L11 2.5 H23 Q25 2.5 25 4.5 V20 Q25 22 23 22 H2 Q0 22 0 20 Z" fill="#f0b429"/><rect x="0" y="6" width="25" height="16" rx="1.5" fill="#ffd65c"/><rect x="8" y="15" width="10" height="5" rx="1" fill="#1f8fe0"/></svg>
<svg class="a" style="left:596px;top:733px;" width="25" height="22" viewBox="0 0 25 22"><rect x="0" y="6" width="25" height="16" rx="1" fill="#1b8ad8"/><path d="M0 7 L12.5 0 L25 7 L12.5 15 Z" fill="#0a5fb0"/><path d="M3 8 H22 L12.5 14 Z" fill="#fff"/><path d="M0 22 L12.5 12 L25 22 Z" fill="#2aa5ee"/></svg>
<svg class="a" style="left:640px;top:733px;" width="25" height="22" viewBox="0 0 25 22"><rect x="6" y="0" width="19" height="22" rx="1.5" fill="#21a366"/><rect x="6" y="7" width="19" height="8" fill="#107c41"/><rect x="6" y="15" width="19" height="7" fill="#185c37"/><rect x="0" y="5" width="13" height="13" rx="1" fill="#107c41"/><path d="M3.5 8 L9.5 15 M9.5 8 L3.5 15" stroke="#fff" stroke-width="1.8"/></svg>
<svg class="a" style="left:684px;top:732px;" width="25" height="25" viewBox="0 0 25 25"><defs><linearGradient id="eg1" x1="0" y1="0" x2="1" y2="0.6"><stop offset="0" stop-color="#2fb6ef"/><stop offset=".5" stop-color="#2cc4c4"/><stop offset="1" stop-color="#6ee06a"/></linearGradient><linearGradient id="eg2" x1="0" y1="0" x2="0.3" y2="1"><stop offset="0" stop-color="#1a8ee6"/><stop offset="1" stop-color="#0c5fb8"/></linearGradient></defs>
<circle cx="12" cy="12" r="12" fill="url(#eg1)"/>
<path d="M0.5 14 C0 8 5 5.5 9 6 C13 6.5 15 9 14 12 C13 14 11 13.5 10.5 12.5 C9.5 15 11 19 15.5 20 C18 20.5 20.5 19.5 22 18 C20 22 16 24 12 24 C5 24 0.8 19.5 0.5 14 Z" fill="url(#eg2)"/>
<path d="M10.5 12.5 C11 10.5 13 10.5 14 12 C14 13.5 12.5 14.5 10.8 14 Z" fill="#2a2016"/></svg>
<svg class="a" style="left:728px;top:732px;" width="24" height="24" viewBox="0 0 24 24"><rect x="0" y="0" width="24" height="24" fill="#ef4a1e"/>
<path d="M12 1.8 L19 3 C18 9 17 13 13 16.5 Z" fill="#fff"/><path d="M10.5 6 C5.5 8 4 13 4 20 L11 21.5 C11 17 11.5 12 10.5 6 Z" fill="#fff"/><path d="M10.5 6 L12.5 9 L12.5 15 L11 17 Z" fill="#fff" opacity=".85"/></svg>
<svg class="a" style="left:772px;top:733px;" width="25" height="22" viewBox="0 0 25 22"><rect x="6" y="0" width="19" height="22" rx="1.5" fill="#41a5ee"/><rect x="6" y="7" width="19" height="8" fill="#2b7cd3"/><rect x="6" y="15" width="19" height="7" fill="#185abd"/><rect x="0" y="5" width="13" height="13" rx="1" fill="#185abd"/><path d="M2.5 8 L4.5 15 L6.5 10 L8.5 15 L10.5 8" fill="none" stroke="#fff" stroke-width="1.3"/></svg>
<svg class="a" style="left:816px;top:731px;" width="24" height="25" viewBox="0 0 24 25"><defs><radialGradient id="ff" cx=".7" cy=".2" r=".9"><stop offset="0" stop-color="#fff44f"/><stop offset=".35" stop-color="#ff9a1f"/><stop offset=".75" stop-color="#ff3a5a"/><stop offset="1" stop-color="#e31587"/></radialGradient><radialGradient id="fp" cx=".4" cy=".3" r=".8"><stop offset="0" stop-color="#b24ae8"/><stop offset="1" stop-color="#5a3be0"/></radialGradient></defs>
<path d="M12 24.5 C5.5 24.5 0.8 19.5 0.8 13.5 C0.8 10 2 7 3.5 5.5 C3.8 7 4.5 8 5.5 8.5 C6 5 8 2.5 9.5 2 C9 4 10 5.5 12 6 C13 3.5 15 1.2 16.5 0.3 C17 3 19 4 21 6 C23 8.5 23.5 11 23.5 13.5 C23.5 19.5 18.5 24.5 12 24.5 Z" fill="url(#ff)"/>
<circle cx="11.8" cy="13.8" r="5.5" fill="url(#fp)"/><path d="M4 11 C6 9.5 8.5 9.5 10.5 10.5 C8 11 7 12 6.5 13 Z" fill="#ff9a1f"/></svg>
<svg class="a" style="left:860px;top:732px;" width="24" height="24" viewBox="0 0 24 24"><defs><linearGradient id="wx" x1="0" y1="0" x2="1" y2="0"><stop offset="0" stop-color="#22c6f2"/><stop offset="1" stop-color="#1a5ff0"/></linearGradient><linearGradient id="wx2" x1="0" y1="1" x2="1" y2="0"><stop offset="0" stop-color="#1a5ff0"/><stop offset=".6" stop-color="#1a6ff0"/><stop offset="1" stop-color="#40d070"/></linearGradient></defs>
<rect x="0" y="0" width="24" height="24" rx="5" fill="#151515"/>
<ellipse cx="7.8" cy="12.8" rx="3.6" ry="5.6" fill="none" stroke="url(#wx)" stroke-width="3.4" transform="rotate(-12 7.8 12.8)"/>
<ellipse cx="15.6" cy="12.4" rx="3.6" ry="5.4" fill="none" stroke="url(#wx2)" stroke-width="3.4" transform="rotate(-12 15.6 12.4)"/></svg>
<svg class="a" style="left:904px;top:732px;" width="24" height="24" viewBox="0 0 24 24"><circle cx="12" cy="12" r="12" fill="#1ed760"/><path d="M5.5 8.5 C10 7 15 7.5 19 9.5 M6.5 12 C10 11 14 11.5 17.5 13 M7.5 15.5 C10.5 14.7 13.5 15 16 16.2" fill="none" stroke="#111" stroke-width="2" stroke-linecap="round"/></svg>
<div class="a" style="left:941px;top:724px;width:40px;height:40px;border-radius:5px;background:#3f3631;opacity:.85"></div>
<svg class="a" style="left:948px;top:734px;" width="24" height="21" viewBox="0 0 24 21"><rect x="0" y="0" width="24" height="18" rx="1" fill="#2a8fd8"/><rect x="1.5" y="1.5" width="21" height="15" fill="#9fd8f7"/><circle cx="8" cy="8" r="5" fill="#1f6fbf"/><path d="M8 3 A5 5 0 0 1 13 8 H8 Z" fill="#f39a2b"/><path d="M15 5 H21 M15 8.5 H21 M15 12 H21" stroke="#1f6fbf" stroke-width="1.3"/><rect x="3" y="14" width="18" height="1.5" fill="#f39a2b"/></svg>
<div class="a" style="left:952px;top:760px;width:16px;height:3px;background:#5ec8f5;border-radius:2px;"></div>
<svg class="a" style="left:992px;top:732px;" width="24" height="24" viewBox="0 0 24 24"><circle cx="12" cy="12" r="12" fill="#db4437"/><path d="M12 12 L1.6 6 A12 12 0 0 0 12 24 Z" fill="#0f9d58"/><path d="M12 12 L12 24 A12 12 0 0 0 22.4 6 Z" fill="#ffcd40"/><path d="M12 12 L22.4 6 A12 12 0 0 0 1.6 6 Z" fill="#db4437"/><circle cx="12" cy="12" r="5.5" fill="#fff"/><circle cx="12" cy="12" r="4.3" fill="#4285f4"/></svg>
<svg class="a" style="left:1036px;top:732px;" width="24" height="24" viewBox="0 0 24 24"><circle cx="12" cy="12" r="12" fill="#db4437"/><path d="M12 12 L1.6 6 A12 12 0 0 0 12 24 Z" fill="#0f9d58"/><path d="M12 12 L12 24 A12 12 0 0 0 22.4 6 Z" fill="#ffcd40"/><path d="M12 12 L22.4 6 A12 12 0 0 0 1.6 6 Z" fill="#db4437"/><circle cx="12" cy="12" r="5.5" fill="#fff"/><circle cx="12" cy="12" r="4.3" fill="#4285f4"/></svg>
<div class="a" style="left:1049px;top:727px;width:16px;height:16px;border-radius:50%;background:#d8d8dc;border:1px solid #2a201a"></div>
<svg class="a" style="left:1051px;top:729px;" width="12" height="12" viewBox="0 0 12 12"><path d="M2 2 L4.5 4 M10 2 L7.5 4" stroke="#1a4a9a" stroke-width="1.4"/><circle cx="6" cy="7" r="2.5" fill="#555"/><path d="M3 11 L6 8.5 L9 11" fill="none" stroke="#444" stroke-width="1.2"/></svg>
<svg class="a" style="left:1083px;top:732px;" width="19" height="24" viewBox="0 0 19 24"><defs><clipPath id="dc"><path d="M10 0 C9 4 0 10 0 16 C0 21 4 24 9.5 24 C15 24 18.5 20.5 18.5 15.5 C18.5 9 11 6 10 0 Z"/></clipPath></defs>
<g clip-path="url(#dc)"><rect x="-5" y="-5" width="30" height="35" fill="#25c2f5"/>
<path d="M-5 12 L25 22 L25 -5 L-5 -5 Z" fill="#8a5ce0"/><path d="M-5 7 L25 17 L25 -5 L-5 -5 Z" fill="#ea5a9e"/><path d="M-5 1 L25 10 L25 -5 L-5 -5 Z" fill="#ffd02a"/></g></svg>
<div class="a" style="left:561px;top:760px;width:6px;height:3px;background:#a0a0a0;border-radius:2px;"></div>
<div class="a" style="left:649px;top:760px;width:6px;height:3px;background:#a0a0a0;border-radius:2px;"></div>
<div class="a" style="left:825px;top:760px;width:6px;height:3px;background:#a0a0a0;border-radius:2px;"></div>
<div class="a" style="left:869px;top:760px;width:6px;height:3px;background:#a0a0a0;border-radius:2px;"></div>
<div class="a" style="left:913px;top:760px;width:6px;height:3px;background:#a0a0a0;border-radius:2px;"></div>
<div class="a" style="left:1045px;top:760px;width:6px;height:3px;background:#a0a0a0;border-radius:2px;"></div>
<div class="a" style="left:1089px;top:760px;width:6px;height:3px;background:#a0a0a0;border-radius:2px;"></div>
<svg class="a" style="left:1136px;top:740px;" width="13" height="8" viewBox="0 0 13 8"><path d="M0.8 7 L6.5 1.2 L12.2 7" fill="none" stroke="#fff" stroke-width="1.4"/></svg>
<svg class="a" style="left:1211px;top:735px;" width="18" height="18" viewBox="0 0 18 18"><rect x="0.7" y="1.7" width="13" height="10" fill="none" stroke="#fff" stroke-width="1.3"/><path d="M7 12 V15 M3 15.5 H11" stroke="#fff" stroke-width="1.3"/><rect x="13" y="0.7" width="4.3" height="6.5" rx="1" fill="#2e231b" stroke="#fff" stroke-width="1.1"/><path d="M15 7.5 V12" stroke="#fff"/></svg>
<svg class="a" style="left:1235px;top:737px;" width="18" height="15" viewBox="0 0 18 15"><path d="M1 5 H4 L8 1.5 V13.5 L4 10 H1 Z" fill="none" stroke="#fff" stroke-width="1.2"/><path d="M10.5 5 C11.7 6.5 11.7 8.5 10.5 10" fill="none" stroke="#fff" stroke-width="1.1"/><path d="M13 3 C15 5.5 15 9.5 13 12" fill="none" stroke="#777" stroke-width="1.1"/><path d="M15.5 1 C18.3 4.5 18.3 10.5 15.5 14" fill="none" stroke="#555" stroke-width="1.1"/></svg>
<svg class="a" style="left:1332px;top:738px;" width="14" height="16" viewBox="0 0 14 16"><path d="M7 0.5 C3.5 0.5 2 3 2 6 V10 L0.5 12.5 H13.5 L12 10 V6 C12 3 10.5 0.5 7 0.5 Z" fill="#8fe0f7"/><path d="M5 13.5 C5 16 9 16 9 13.5 Z" fill="#8fe0f7"/></svg>
<svg class="a" style="left:0;top:0" width="1366" height="768" font-family="Liberation Sans" xml:space="preserve"><text x="22.10" y="739.00" font-size="10.71" fill="#fff" textLength="16.20" lengthAdjust="spacingAndGlyphs">32°</text><text x="269.00" y="748.00" font-size="13.32" fill="#d8d2cc" textLength="60.00" lengthAdjust="spacingAndGlyphs">Búsqueda</text><text x="1171.00" y="741.00" font-size="9.99" fill="#fff" textLength="20.00" lengthAdjust="spacingAndGlyphs">ESP</text><text x="1171.00" y="756.70" font-size="11.11" fill="#fff" textLength="21.00" lengthAdjust="spacingAndGlyphs">LAA</text><text x="1294.50" y="740.00" font-size="11.39" fill="#fff" textLength="28.50" lengthAdjust="spacingAndGlyphs">16:56</text><text x="1268.00" y="756.00" font-size="12.36" fill="#fff" textLength="55.00" lengthAdjust="spacingAndGlyphs">19/3/2024</text></svg>
</body></html>
